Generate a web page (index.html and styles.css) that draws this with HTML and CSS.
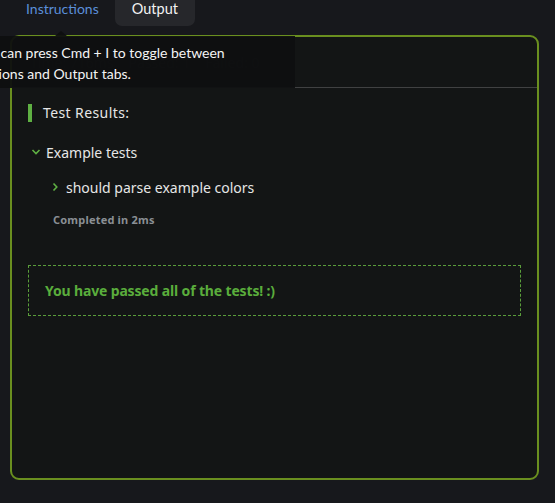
FILE: index.html
```html
<!DOCTYPE html>
<html>
<head>
<meta charset="utf-8">
<link rel="stylesheet" href="styles.css">
</head>
<body>
<div class="tabs">
  <div class="tab">Instructions</div>
  <div class="tab active">Output</div>
</div>
<div class="panel">
  <div class="header">
    <span>Time: 716ms</span><span>Passed: 1</span><span>Failed: 0</span>
  </div>
  <div class="content">
    <div class="results-title">Test Results:</div>
    <div class="group">
      <div class="group-row">
        <svg class="chev" width="10" height="8" viewBox="0 0 10 8"><path d="M1.5 2 L5 5.5 L8.5 2" fill="none" stroke="#5fb043" stroke-width="1.6"/></svg>
        <span>Example tests</span>
      </div>
      <div class="test-row">
        <svg class="chev" width="6" height="10" viewBox="0 0 6 10"><path d="M1.5 1.5 L4.8 5 L1.5 8.5" fill="none" stroke="#5fb043" stroke-width="1.6"/></svg>
        <span>should parse example colors</span>
      </div>
      <div class="completed">Completed in 2ms</div>
    </div>
    <div class="passed">You have passed all of the tests! :)</div>
  </div>
</div>
<div class="tooltip">You can press Cmd + I to toggle between<br>Instructions and Output tabs.</div>
</body>
</html>
```
FILE: styles.css
```css
html, body {
  margin: 0;
  padding: 0;
}
body {
  background: #17181c;
  width: 555px;
  height: 503px;
  overflow: hidden;
  position: relative;
  font-family: "Noto Sans", sans-serif;
}
.tabs {
  display: flex;
  padding-left: 10px;
  height: 26px;
}
.tab {
  font-family: Lato, sans-serif;
  font-size: 14px;
  line-height: 18px;
  padding: 0 16px 8px;
  color: #5b8fd9;
  border-radius: 0 0 7px 7px;
}
.tab.active {
  background: #26272b;
  color: #f2f2f2;
  padding: 0 17px 8px;
  font-size: 14.5px;
}
.panel {
  margin: 9px 16px 0 10px;
  height: 441px;
  border: 2px solid #6a8f1f;
  border-radius: 9px;
  background: #131515;
}
.header {
  height: 50px;
  border-bottom: 1px solid #404142;
  display: flex;
  align-items: center;
  gap: 15px;
  padding-left: 18px;
  font-size: 14px;
  color: #2a2c2e;
}
.content {
  padding: 16px 16px 0;
}
.results-title {
  border-left: 4px solid #5fb043;
  padding-left: 11px;
  height: 18px;
  line-height: 18px;
  font-size: 14px;
  color: #e6e6e6;
  letter-spacing: 0.4px;
}
.group {
  margin-top: 21px;
}
.group-row {
  display: flex;
  align-items: center;
  height: 18px;
  padding-left: 3px;
  font-size: 14px;
  color: #e6e6e6;
}
.group-row .chev {
  margin-right: 5px;
}
.test-row {
  display: flex;
  align-items: center;
  height: 18px;
  margin-top: 17px;
  padding-left: 24px;
  font-size: 14px;
  color: #e6e6e6;
}
.test-row .chev {
  margin-right: 8px;
}
.completed {
  margin-top: 17px;
  padding-left: 25px;
  font-size: 11px;
  font-weight: 700;
  color: #8a8f94;
  letter-spacing: 0.2px;
  line-height: 14px;
}
.passed {
  margin-top: 38px;
  height: 49px;
  border: 1px dashed #5a9e3a;
  display: flex;
  align-items: center;
  padding: 0 16px;
  font-size: 14px;
  font-weight: 700;
  color: #5aad3c;
  letter-spacing: -0.15px;
}
.tooltip {
  position: absolute;
  left: -49px;
  top: 36px;
  width: 344px;
  padding: 6px 6px 4px 0;
  box-sizing: border-box;
  background: rgba(14, 15, 16, 0.94);
  font-family: Lato, sans-serif;
  font-size: 14px;
  line-height: 21px;
  color: #f4f4f4;
  text-indent: 23px;
}
.tooltip::before {
  content: "";
  position: absolute;
  left: 104px;
  top: -5px;
  border-left: 6px solid transparent;
  border-right: 6px solid transparent;
  border-bottom: 5px solid rgba(14, 15, 16, 0.94);
}
```
